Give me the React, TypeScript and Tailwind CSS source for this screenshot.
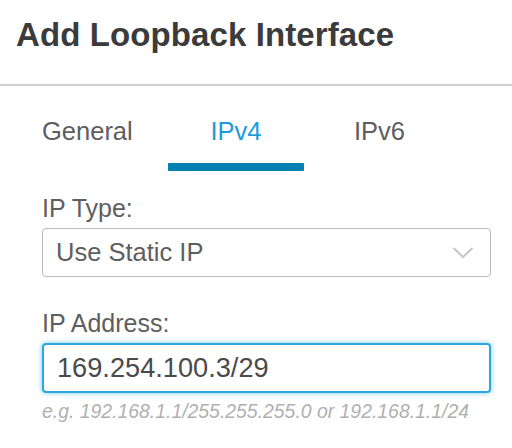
import React from 'react';

const font = { fontFamily: '"Liberation Sans", Arial, sans-serif' };

const Tab: React.FC<{ label: string; active?: boolean; className?: string }> = ({ label, active, className }) => (
  <div className={`flex flex-col ${className ?? ''}`}>
    <span className={`h-[77px] pt-[30px] text-[25.5px] leading-[30px] ${active ? 'text-[#1e9bd7]' : 'text-[#5e5e5e]'}`}>
      {label}
    </span>
    <div className={`h-[8px] rounded-[1px] ${active ? 'bg-[#007fb1]' : 'bg-transparent'}`} />
  </div>
);

export default function App() {
  return (
    <div className="w-[512px] h-[448px] bg-white overflow-hidden" style={font}>
      <div className="h-[84px] px-4 pt-[18px]">
        <h1 className="text-[33px] leading-[34px] font-bold text-[#3b3b3b] tracking-[0.1px]">Add Loopback Interface</h1>
      </div>
      <div className="h-[2px] bg-[#cfcfcf]" />

      <div className="pl-[42px] flex">
        <Tab label="General" className="w-[126px]" />
        <Tab label="IPv4" active className="w-[136px] items-stretch text-center" />
        <Tab label="IPv6" className="ml-[50px]" />
      </div>

      <div className="px-[42px] pr-[21px]">
        <label className="block mt-[22px] text-[25px] leading-[30px] text-[#5e5e5e]">IP Type:</label>
        <div className="mt-[5px] h-[49px] rounded-[4px] border border-[#b9b9b9] flex items-center justify-between pl-[13px] pr-[16px]">
          <span className="text-[25.5px] text-[#5e5e5e]">Use Static IP</span>
          <svg width="22" height="14" viewBox="0 0 22 14" fill="none">
            <path d="M1.5 2 L11 11 L20.5 2" stroke="#c4c4c4" strokeWidth="2" />
          </svg>
        </div>

        <label className="block mt-[31px] text-[25px] leading-[30px] text-[#5e5e5e]">IP Address:</label>
        <div className="mt-[5px] h-[50px] rounded-[4px] border-2 border-[#2aa8de] shadow-[0_0_4px_1px_rgba(42,168,222,0.45)] flex items-center pl-[13px]">
          <span className="text-[27.2px] text-[#4a4a4a]">169.254.100.3/29</span>
        </div>
        <p className="mt-[6px] text-[19.4px] italic text-[#b0b0b0] leading-[24px]">e.g. 192.168.1.1/255.255.255.0 or 192.168.1.1/24</p>
      </div>
    </div>
  );
}
